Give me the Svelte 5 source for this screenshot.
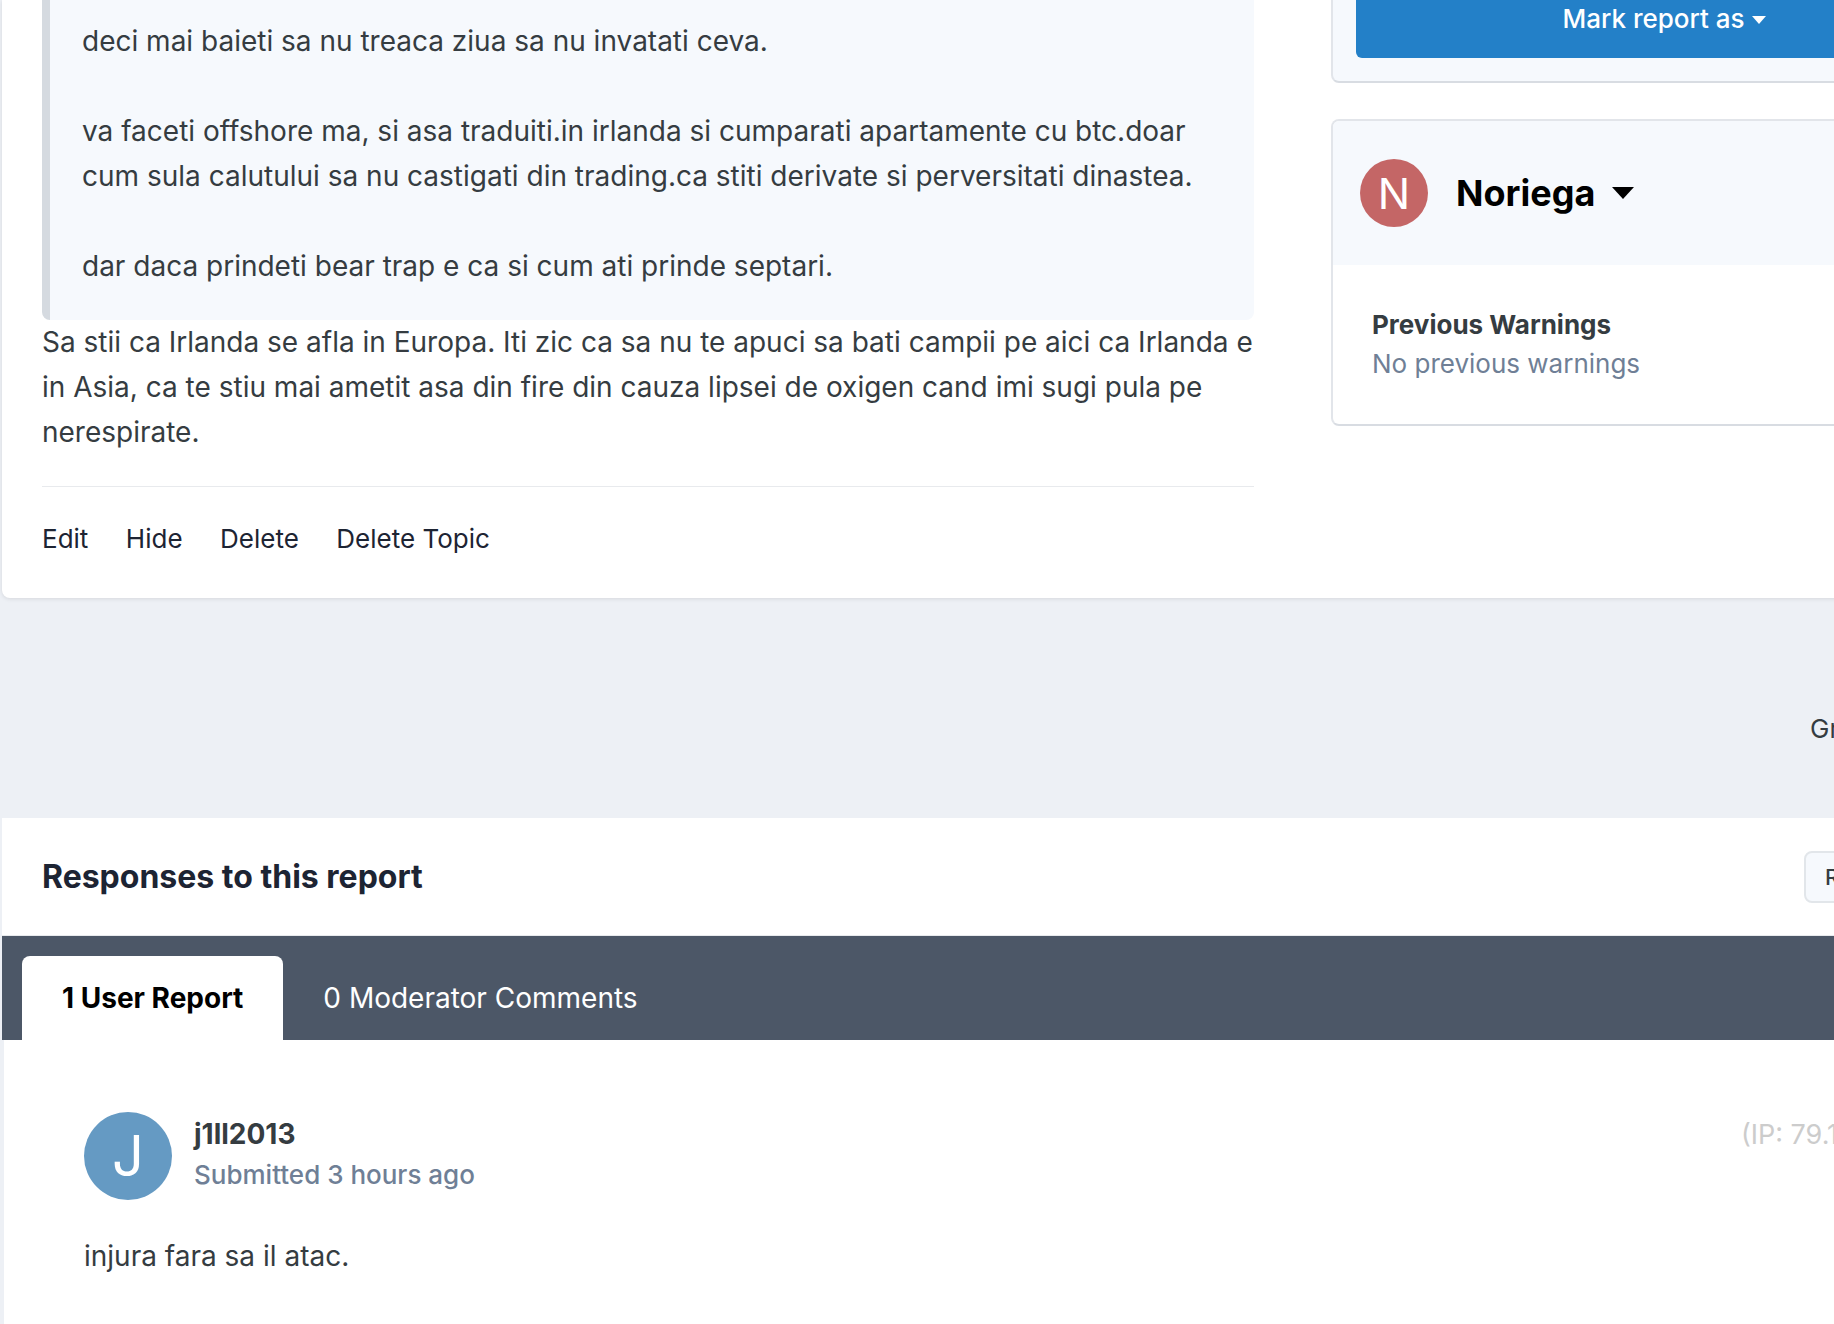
<script>
	let tabs = [
		{ label: '1 User Report', active: true },
		{ label: '0 Moderator Comments', active: false }
	];
	let actions = ['Edit', 'Hide', 'Delete', 'Delete Topic'];
</script>

<div class="page">
	<div class="inner">
		<section class="report">
			<div class="content">
				<blockquote>
					<p>deci mai baieti sa nu treaca ziua sa nu invatati ceva.</p>
					<p>va faceti offshore ma, si asa traduiti.in irlanda si cumparati apartamente cu btc.doar cum sula calutului sa nu castigati din trading.ca stiti derivate si perversitati dinastea.</p>
					<p>dar daca prindeti bear trap e ca si cum ati prinde septari.</p>
				</blockquote>
				<p class="post">Sa stii ca Irlanda se afla in Europa. Iti zic ca sa nu te apuci sa bati campii pe aici ca Irlanda e in Asia, ca te stiu mai ametit asa din fire din cauza lipsei de oxigen cand imi sugi pula pe nerespirate.</p>
				<ul class="actions">
					{#each actions as action}
						<li>{action}</li>
					{/each}
				</ul>
			</div>

			<aside>
				<div class="box status">
					<button class="mark">Mark report as <span class="caret small"></span></button>
				</div>
				<div class="box author">
					<div class="author-head">
						<span class="avatar red">N</span>
						<span class="author-name">Noriega</span>
						<span class="caret big"></span>
					</div>
					<div class="author-body">
						<h4>Previous Warnings</h4>
						<p>No previous warnings</p>
					</div>
				</div>
			</aside>
		</section>

		<div class="between">
			<span>Group</span>
		</div>

		<section class="responses">
			<header>
				<h2>Responses to this report</h2>
				<button class="outline">Reply</button>
			</header>
			<div class="tabbar">
				{#each tabs as tab}
					<div class="tab" class:active={tab.active}>{tab.label}</div>
				{/each}
			</div>
			<div class="comment">
				<div class="comment-head">
					<span class="avatar blue">J</span>
					<div class="who">
						<strong>j1ll2013</strong>
						<small>Submitted 3 hours ago</small>
					</div>
					<span class="ip">(IP: 79.112.54.201)</span>
				</div>
				<p class="comment-text">injura fara sa il atac.</p>
			</div>
		</section>
	</div>
</div>

<style>
	:global(body) {
		margin: 0;
		background: #edf0f5;
	}

	.page {
		width: 1834px;
		height: 1324px;
		overflow: hidden;
		font-family: Inter, "Liberation Sans", sans-serif;
		color: #353c41;
	}

	.inner {
		width: 2000px;
		padding-left: 2px;
		box-sizing: border-box;
	}

	.report {
		display: flex;
		height: 598px;
		background: #fff;
		border-radius: 0 0 0 8px;
		box-shadow: 0 1px 4px rgba(0, 0, 0, 0.1);
	}

	.content {
		flex: none;
		width: 1212px;
		margin-left: 40px;
		font-size: 28px;
		line-height: 45px;
	}

	blockquote {
		margin: 0;
		height: 320px;
		box-sizing: border-box;
		padding: 19px 32px 0 32px;
		background: #f6f9fd;
		border-left: 8px solid #d5dae0;
		border-radius: 0 0 8px 8px;
	}

	blockquote p {
		margin: 0 0 45px;
	}

	.post {
		margin: 0;
		padding-bottom: 31px;
		border-bottom: 1px solid #e8eaed;
	}

	.actions {
		display: flex;
		gap: 37.5px;
		margin: 29px 0 0;
		padding: 0;
		list-style: none;
		color: #1d2433;
		font-size: 26px;
	}

	aside {
		flex: none;
		width: 667px;
		margin-left: 77px;
	}

	.box {
		box-sizing: border-box;
		border: 2px solid #e2e5ea;
		border-bottom-color: #d8dce2;
		border-radius: 8px;
	}

	.status {
		height: 83px;
		padding: 0 24px 0 23px;
		border-top: 0;
		border-radius: 0 0 8px 8px;
		background: #f6f9fd;
	}

	.mark {
		display: block;
		width: 100%;
		height: 58px;
		padding: 0 0 20px;
		border: 0;
		border-radius: 0 0 6px 6px;
		background: #2380c8;
		color: #fff;
		font: 500 26px/38px Inter, "Liberation Sans", sans-serif;
	}

	.caret {
		display: inline-block;
		border-style: solid;
		border-color: currentColor transparent transparent;
	}

	.small {
		border-width: 8px 7.5px 0;
		vertical-align: 4px;
	}

	.big {
		border-width: 12px 11px 0;
		margin-left: 17px;
		color: #000;
	}

	.author {
		height: 307px;
		margin-top: 36px;
		background: #fff;
		overflow: hidden;
	}

	.author-head {
		display: flex;
		align-items: center;
		height: 144px;
		padding-left: 27px;
		background: #f6f9fd;
	}

	.avatar {
		display: flex;
		flex: none;
		align-items: center;
		justify-content: center;
		border-radius: 50%;
		color: #fff;
	}

	.red {
		width: 68px;
		height: 68px;
		background: #c46666;
		font-size: 43px;
	}

	.blue {
		width: 88px;
		height: 88px;
		background: #659ac3;
		font-size: 56px;
	}

	.author-name {
		margin-left: 28px;
		color: #000;
		font-size: 36px;
		font-weight: 700;
	}

	.author-body {
		padding: 40px 40px 0 39px;
		font-size: 26px;
		line-height: 39px;
	}

	.author-body h4 {
		margin: 0;
		font-size: 26px;
		font-weight: 700;
	}

	.author-body p {
		margin: 0;
		color: #6f7f96;
	}

	.between {
		height: 220px;
		box-sizing: border-box;
		padding: 110px 0 0 1808px;
		font-size: 26px;
		line-height: 42px;
	}

	.responses {
		display: flex;
		flex-direction: column;
		background: #fff;
		height: 506px;
	}

	.responses header {
		display: flex;
		flex: none;
		align-items: center;
		justify-content: space-between;
		height: 117px;
		padding-left: 40px;
		border-bottom: 1px solid #e8eaed;
	}

	h2 {
		margin: 0 0 1px;
		color: #1d2433;
		font-size: 32px;
		font-weight: 700;
	}

	.outline {
		width: 196px;
		height: 52px;
		padding: 0 0 0 19px;
		border: 2px solid #e2e6ea;
		border-radius: 8px;
		background: #f6f9fd;
		color: #353c41;
		text-align: left;
		font: 500 22px Inter, "Liberation Sans", sans-serif;
	}

	.tabbar {
		display: flex;
		flex: none;
		align-items: flex-end;
		height: 104px;
		padding-left: 20px;
		background: #4c5767;
	}

	.tab {
		height: 84px;
		padding: 0 40px;
		border-radius: 8px 8px 0 0;
		color: #fff;
		font-size: 28px;
		line-height: 84px;
	}

	.tab.active {
		background: #fff;
		color: #000;
		font-weight: 700;
	}

	.comment {
		flex: 1;
		padding: 72px 0 0 80px;
		border-left: 2px solid #edf0f5;
		font-size: 28px;
		line-height: 45px;
	}

	.comment-head {
		display: flex;
		align-items: center;
	}

	.who {
		display: flex;
		flex-direction: column;
		margin: -2px 0 0 22px;
	}

	.who strong {
		font-size: 28px;
		font-weight: 700;
		line-height: 40px;
	}

	.who small {
		color: #6f7f96;
		font-size: 26px;
		font-weight: 500;
		line-height: 42px;
	}

	.ip {
		margin: -44px 0 0 auto;
		padding-right: 32px;
		color: #ccc;
		font-size: 27px;
	}

	.comment-text {
		margin: 34px 0 0;
	}
</style>
